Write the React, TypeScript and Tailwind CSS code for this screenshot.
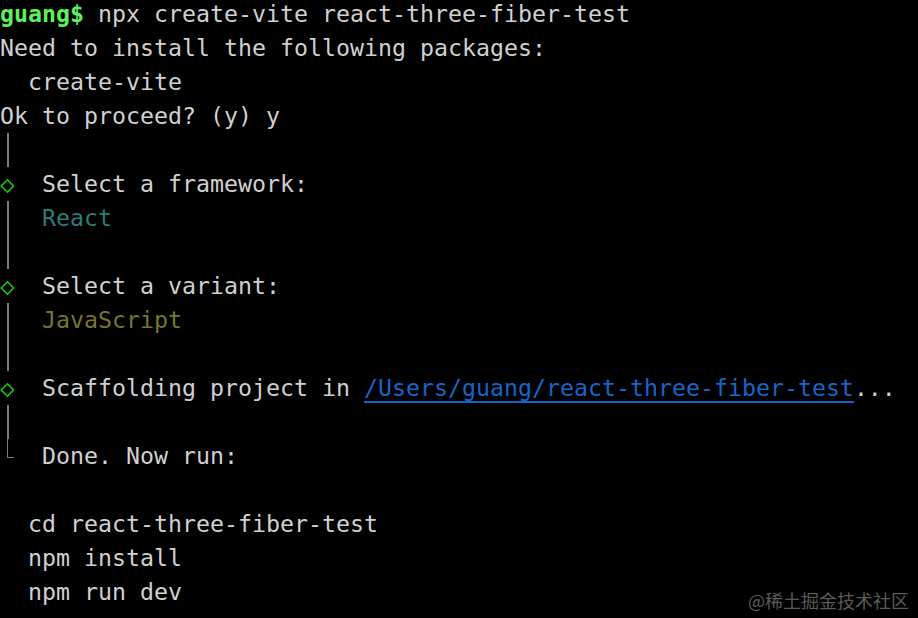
import type { ReactNode } from "react";

type Gutter = "none" | "bar" | "diamond" | "corner";

const mono = "font-['DejaVu_Sans_Mono','Liberation_Mono',monospace]";

function GutterMark({ kind }: { kind: Gutter }) {
  if (kind === "bar") {
    return (
      <div className="w-[14px] h-full flex justify-center">
        <div className="w-[1.5px] h-full bg-[#7a7a7a] ml-[2px]" />
      </div>
    );
  }
  if (kind === "corner") {
    return (
      <div className="w-[14px] h-full pl-[7px]">
        <div className="w-[7px] h-[19px] border-l-[1.5px] border-b-[1.5px] border-[#7a7a7a]" />
      </div>
    );
  }
  if (kind === "diamond") {
    return (
      <div className="w-[14px] h-full flex items-center">
        <svg width="14" height="14" viewBox="0 0 14 14" className="mt-[3px]">
          <polygon points="7.5,0.8 13.5,7 7.5,13.2 1.2,7" fill="none" stroke="#16c60c" strokeWidth="1.6" />
        </svg>
      </div>
    );
  }
  return null;
}

function Line({ gutter = "none", children }: { gutter?: Gutter; children?: ReactNode }) {
  return (
    <div className="h-[34px] flex items-center whitespace-pre">
      <GutterMark kind={gutter} />
      {children}
    </div>
  );
}

export default function App() {
  return (
    <div className="relative w-full h-[618px] bg-black overflow-hidden">
      <div className={`${mono} text-[23.25px] leading-[34px] text-[#d0d0d0] -mt-[3px]`}>
        <Line>
          <span className="text-[#5ef05a] font-bold">guang$</span>
          <span> npx create-vite react-three-fiber-test</span>
        </Line>
        <Line>Need to install the following packages:</Line>
        <Line>  create-vite</Line>
        <Line>Ok to proceed? (y) y</Line>
        <Line gutter="bar" />
        <Line gutter="diamond">  Select a framework:</Line>
        <Line gutter="bar">
          <span className="text-[#2f7a7a]">  React</span>
        </Line>
        <Line gutter="bar" />
        <Line gutter="diamond">  Select a variant:</Line>
        <Line gutter="bar">
          <span className="text-[#77772a]">  JavaScript</span>
        </Line>
        <Line gutter="bar" />
        <Line gutter="diamond">
          <span>  Scaffolding project in </span>
          <span className="text-[#1765c8] underline underline-offset-[5px] decoration-[2px]">
            /Users/guang/react-three-fiber-test
          </span>
          <span>...</span>
        </Line>
        <Line gutter="bar" />
        <Line gutter="corner">  Done. Now run:</Line>
        <Line />
        <Line>  cd react-three-fiber-test</Line>
        <Line>  npm install</Line>
        <Line>  npm run dev</Line>
      </div>
      <div className="absolute right-[9px] bottom-[8px] text-[18px] leading-[20px] text-[#5a5a5a] font-['Noto_Sans_CJK_SC','Noto_Sans',sans-serif]">
        @稀土掘金技术社区
      </div>
    </div>
  );
}
